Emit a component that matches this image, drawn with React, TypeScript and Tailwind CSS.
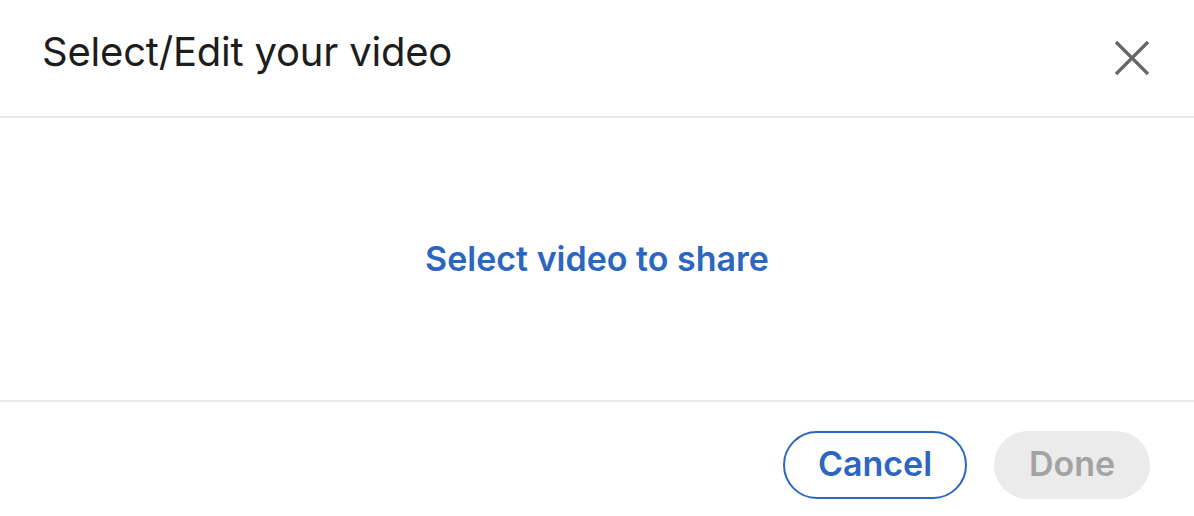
import React from "react";

export default function App() {
  return (
    <div
      className="w-[1194px] h-[516px] bg-white flex flex-col overflow-hidden"
      style={{ fontFamily: "Inter, 'Noto Sans', sans-serif" }}
    >
      <div className="h-[118px] flex items-center justify-between pl-[42px] pr-[42px] border-b-2 border-[#e8e8e8] shrink-0">
        <h1 className="text-[40px] text-[#1d1d1d] font-normal leading-none tracking-[-0.2px] mb-[12px]">
          Select/Edit your video
        </h1>
        <button className="w-[40px] h-[40px] flex items-center justify-center">
          <svg width="38" height="38" viewBox="0 0 38 38">
            <path d="M3 3 L35 35 M35 3 L3 35" stroke="#666666" strokeWidth="3.2" strokeLinecap="butt" />
          </svg>
        </button>
      </div>
      <div className="h-[284px] flex items-center justify-center border-b-2 border-[#e8e8e8] shrink-0">
        <span className="text-[34px] font-semibold text-[#2b66c1] leading-none">
          Select video to share
        </span>
      </div>
      <div className="flex-1 flex items-start justify-end pr-[44px] pt-[29px] gap-[27px]">
        <button className="h-[68px] w-[184px] rounded-full border-2 border-[#2b66c1] text-[#2b66c1] text-[34px] font-semibold flex items-center justify-center pb-[3px] leading-none">
          Cancel
        </button>
        <button className="h-[68px] w-[156px] rounded-full bg-[#ebebeb] text-[#a3a3a3] text-[34px] font-semibold flex items-center justify-center pb-[3px] leading-none">
          Done
        </button>
      </div>
    </div>
  );
}
